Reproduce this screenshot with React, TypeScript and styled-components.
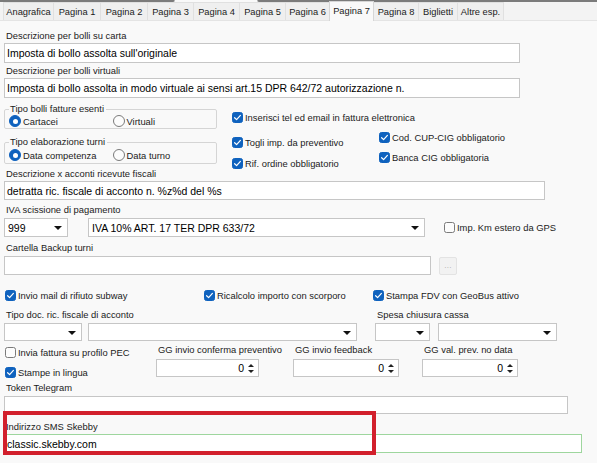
import React from 'react';
import styled, { createGlobalStyle } from 'styled-components';

const GlobalStyle = createGlobalStyle`
  html, body { margin: 0; padding: 0; background: #f9f9f9; }
  body { font-family: "Liberation Sans", Arial, sans-serif; color: #1b1b1b; }
`;

const Page = styled.div`
  width: 597px;
  height: 463px;
  overflow: hidden;
  background: #f9f9f9;
`;

const TopEdge = styled.div`
  display: flex;
  height: 2px;
`;

const EdgeLine = styled.div<{ $w?: number; $round?: 'left' | 'right' }>`
  ${(p) => (p.$w ? `width: ${p.$w}px;` : 'flex: 1;')}
  height: 2px;
  box-sizing: border-box;
  border-bottom: 2px solid #7b7b7b;
  ${(p) => p.$round === 'right' && 'border-right: 1px solid #9a9a9a; border-bottom-right-radius: 3px;'}
  ${(p) => p.$round === 'left' && 'border-left: 1px solid #9a9a9a; border-bottom-left-radius: 3px;'}
`;

const EdgeGap = styled.div<{ $w: number }>`
  width: ${(p) => p.$w}px;
`;

const TabStrip = styled.div`
  display: flex;
  align-items: flex-end;
  height: 19px;
  padding-left: 3px;
  background: #f3f3f3;
  border-bottom: 1px solid #e4e4e4;
  box-sizing: border-box;
`;

const Tab = styled.div<{ $active?: boolean; $w: number }>`
  width: ${(p) => p.$w + 1}px;
  height: ${(p) => (p.$active ? 20 : 18)}px;
  line-height: 18px;
  text-align: center;
  font-size: 9.3px;
  white-space: nowrap;
  box-sizing: border-box;
  background: ${(p) => (p.$active ? '#f9f9f9' : '#efefef')};
  border: 1px solid ${(p) => (p.$active ? '#d6d6d6' : '#e0e0e0')};
  border-bottom: none;
  margin-right: -1px;
  margin-bottom: ${(p) => (p.$active ? -1 : 0)}px;
  position: relative;
  z-index: ${(p) => (p.$active ? 1 : 0)};
  color: #1b1b1b;
`;

const Panel = styled.div`
  padding: 7px 0 0 4px;
  display: flex;
  flex-direction: column;
`;

const Label = styled.div<{ $mt?: number; $w?: number }>`
  height: 15px;
  line-height: 15px;
  font-size: 9.4px;
  padding-left: 2px;
  white-space: nowrap;
  margin-top: ${(p) => p.$mt ?? 0}px;
  ${(p) => p.$w && `width: ${p.$w}px; flex: none; box-sizing: border-box;`}
`;

const TextBox = styled.div<{ $w: number; $h?: number; $mt?: number; $ok?: boolean }>`
  width: ${(p) => p.$w}px;
  height: ${(p) => p.$h ?? 20}px;
  margin-top: ${(p) => p.$mt ?? 0}px;
  box-sizing: border-box;
  border: 1px solid ${(p) => (p.$ok ? '#9ed69e' : '#c6c6c6')};
  background: #fff;
  font-size: 10.5px;
  color: #000;
  padding: 0 2px;
  display: flex;
  align-items: center;
  white-space: nowrap;
  overflow: hidden;
  flex: none;
`;

const MidSection = styled.div`
  display: flex;
  height: 68px;
`;

const GroupCol = styled.div`
  width: 228px;
  flex: none;
  display: flex;
  flex-direction: column;
`;

const Group = styled.fieldset<{ $mt: number; $pad: string }>`
  margin: ${(p) => p.$mt}px 0 0 0;
  width: 213px;
  box-sizing: border-box;
  border: 1px solid #d5d5d5;
  border-radius: 2px;
  padding: ${(p) => p.$pad};
  min-width: 0;
  display: flex;
`;

const Legend = styled.legend`
  font-size: 9.4px;
  line-height: 10px;
  padding: 0 2px 0 1px;
  margin-left: 0;
  color: #1b1b1b;
`;

const RadioOpt = styled.div`
  display: flex;
  align-items: center;
  gap: 2px;
  width: 104px;
  height: 12px;
  font-size: 9.4px;
  white-space: nowrap;
`;

const RadioDot = styled.span<{ $on?: boolean }>`
  width: 12px;
  height: 12px;
  border-radius: 50%;
  box-sizing: border-box;
  flex: none;
  display: flex;
  align-items: center;
  justify-content: center;
  background: ${(p) => (p.$on ? '#0f62be' : '#fcfcfc')};
  border: 1px solid ${(p) => (p.$on ? '#0f62be' : '#7a7a7a')};
  &::after {
    content: '';
    display: ${(p) => (p.$on ? 'block' : 'none')};
    width: 5px;
    height: 5px;
    border-radius: 50%;
    background: #fff;
  }
`;

const CheckArea = styled.div`
  display: flex;
  flex-direction: column;
  padding-top: 12px;
`;

const CheckCols = styled.div`
  display: flex;
`;

const CheckCol = styled.div<{ $w?: number; $pt: number; $gap: number }>`
  display: flex;
  flex-direction: column;
  ${(p) => p.$w && `width: ${p.$w}px; flex: none;`}
  padding-top: ${(p) => p.$pt}px;
  gap: ${(p) => p.$gap}px;
`;

const CheckLine = styled.div<{ $ml?: number; $w?: number }>`
  display: flex;
  align-items: center;
  gap: 2px;
  height: 14px;
  font-size: 9.4px;
  white-space: nowrap;
  margin-left: ${(p) => p.$ml ?? 0}px;
  ${(p) => p.$w && `width: ${p.$w}px;`}
  flex: none;
`;

const Box = styled.span<{ $on?: boolean }>`
  width: 11px;
  height: 11px;
  border-radius: 2.5px;
  box-sizing: border-box;
  flex: none;
  display: flex;
  align-items: center;
  justify-content: center;
  background: ${(p) => (p.$on ? '#0f62be' : '#fcfcfc')};
  border: 1px solid ${(p) => (p.$on ? '#0f62be' : '#7a7a7a')};
`;

const Row = styled.div<{ $mt?: number }>`
  display: flex;
  align-items: center;
  margin-top: ${(p) => p.$mt ?? 0}px;
`;

const Combo = styled.div<{ $w: number; $h: number; $ml?: number }>`
  width: ${(p) => p.$w}px;
  height: ${(p) => p.$h}px;
  margin-left: ${(p) => p.$ml ?? 0}px;
  flex: none;
  box-sizing: border-box;
  border: 1px solid #c6c6c6;
  background: #fff;
  display: flex;
  align-items: center;
  justify-content: space-between;
  padding: 0 5px 0 3px;
  font-size: 10.5px;
  color: #000;
  white-space: nowrap;
`;

const DropArrow = styled.span`
  width: 0;
  height: 0;
  border-left: 4px solid transparent;
  border-right: 4px solid transparent;
  border-top: 4.5px solid #111;
  margin-top: 1px;
`;

const DotsButton = styled.div`
  width: 18px;
  height: 18px;
  margin-left: 8px;
  box-sizing: border-box;
  border: 1px solid #e3e3e3;
  border-radius: 2px;
  background: #f2f2f2;
  color: #a9a9a9;
  font-size: 8px;
  display: flex;
  align-items: center;
  justify-content: center;
  letter-spacing: 0.3px;
`;

const SpinRow = styled.div`
  display: flex;
  align-items: flex-start;
  height: 38px;
`;

const LeftChecks = styled.div`
  width: 152px;
  flex: none;
  display: flex;
  flex-direction: column;
  gap: 6px;
  padding-top: 4px;
`;

const SpinField = styled.div<{ $ml?: number; $w: number }>`
  display: flex;
  flex-direction: column;
  width: ${(p) => p.$w}px;
  flex: none;
  margin-left: ${(p) => p.$ml ?? 0}px;
  padding-top: 1px;
`;

const SpinBox = styled.div`
  height: 18px;
  margin-top: 2px;
  box-sizing: border-box;
  border: 1px solid #c6c6c6;
  background: #fff;
  display: flex;
  align-items: center;
  justify-content: flex-end;
  padding-right: 4px;
  font-size: 10.5px;
  color: #000;
`;

const SpinArrows = styled.span`
  display: flex;
  flex-direction: column;
  gap: 3px;
  margin-left: 3px;
  width: 7px;
  align-items: center;
`;

const SpinTri = styled.span<{ $up?: boolean }>`
  width: 0;
  height: 0;
  border-left: 3px solid transparent;
  border-right: 3px solid transparent;
  ${(p) => (p.$up ? 'border-bottom: 3.5px solid #222;' : 'border-top: 3.5px solid #222;')}
`;

const SmsBlock = styled.div`
  position: relative;
  margin-top: 5px;
`;

const Highlight = styled.div`
  position: absolute;
  left: -1px;
  top: -8px;
  width: 373px;
  height: 44px;
  box-sizing: border-box;
  border: 4px solid #d2202c;
  pointer-events: none;
`;

const Check = ({ on, children, ml, w }: { on?: boolean; children: React.ReactNode; ml?: number; w?: number }) => (
  <CheckLine $ml={ml} $w={w}>
    <Box $on={on}>
      {on && (
        <svg width="9" height="9" viewBox="0 0 9 9">
          <polyline points="1.6,4.7 3.6,6.6 7.4,2.4" fill="none" stroke="#fff" strokeWidth="1.2" strokeLinecap="round" strokeLinejoin="round" />
        </svg>
      )}
    </Box>
    <span>{children}</span>
  </CheckLine>
);

const Radio = ({ on, children }: { on?: boolean; children: React.ReactNode }) => (
  <RadioOpt>
    <RadioDot $on={on} />
    <span>{children}</span>
  </RadioOpt>
);

const Spin = () => (
  <SpinBox>
    0
    <SpinArrows>
      <SpinTri $up />
      <SpinTri />
    </SpinArrows>
  </SpinBox>
);

const tabs: [string, number][] = [
  ['Anagrafica', 50],
  ['Pagina 1', 47],
  ['Pagina 2', 47],
  ['Pagina 3', 46],
  ['Pagina 4', 46],
  ['Pagina 5', 46],
  ['Pagina 6', 44],
  ['Pagina 7', 44],
  ['Pagina 8', 45],
  ['Biglietti', 39],
  ['Altre esp.', 46],
];

export default function App() {
  return (
    <Page>
      <GlobalStyle />
      <TopEdge>
        <EdgeLine $w={175} $round="right" />
        <EdgeGap $w={82} />
        <EdgeLine $round="left" />
      </TopEdge>
      <TabStrip>
        {tabs.map(([t, w]) => (
          <Tab key={t} $w={w} $active={t === 'Pagina 7'}>
            {t}
          </Tab>
        ))}
      </TabStrip>

      <Panel>
        <Label>Descrizione per bolli su carta</Label>
        <TextBox $w={516}>Imposta di bollo assolta sull'originale</TextBox>
        <Label>Descrizione per bolli virtuali</Label>
        <TextBox $w={516}>Imposta di bollo assolta in modo virtuale ai sensi art.15 DPR 642/72 autorizzazione n.</TextBox>

        <MidSection>
          <GroupCol>
            <Group $mt={6} $pad="1px 0 1px 4px">
              <Legend>Tipo bolli fatture esenti</Legend>
              <Radio on>Cartacei</Radio>
              <Radio>Virtuali</Radio>
            </Group>
            <Group $mt={8} $pad="2px 0 2px 4px">
              <Legend>Tipo elaborazione turni</Legend>
              <Radio on>Data competenza</Radio>
              <Radio>Data turno</Radio>
            </Group>
          </GroupCol>
          <CheckArea>
            <Check on>Inserisci tel ed email in fattura elettronica</Check>
            <CheckCols>
              <CheckCol $w={147} $pt={11} $gap={7}>
                <Check on>Togli imp. da preventivo</Check>
                <Check on>Rif. ordine obbligatorio</Check>
              </CheckCol>
              <CheckCol $pt={6} $gap={6}>
                <Check on>Cod. CUP-CIG obbligatorio</Check>
                <Check on>Banca CIG obbligatoria</Check>
              </CheckCol>
            </CheckCols>
          </CheckArea>
        </MidSection>

        <Label>Descrizione x acconti ricevute fiscali</Label>
        <TextBox $w={541} $h={19}>detratta ric. fiscale di acconto n. %z%d del %s</TextBox>

        <Label $mt={2}>IVA scissione di pagamento</Label>
        <Row $mt={1}>
          <Combo $w={64} $h={19}>
            999
            <DropArrow />
          </Combo>
          <Combo $w={337} $h={19} $ml={20}>
            IVA 10% ART. 17 TER DPR 633/72
            <DropArrow />
          </Combo>
          <Check ml={19}>Imp. Km estero da GPS</Check>
        </Row>

        <Label $mt={3}>Cartella Backup turni</Label>
        <Row $mt={1}>
          <TextBox $w={427} $h={19} />
          <DotsButton>...</DotsButton>
        </Row>

        <Row $mt={13}>
          <Check on ml={1} w={199}>Invio mail di rifiuto subway</Check>
          <Check on w={169}>Ricalcolo importo con scorporo</Check>
          <Check on>Stampa FDV con GeoBus attivo</Check>
        </Row>

        <Row $mt={5}>
          <Label $w={371}>Tipo doc. ric. fiscale di acconto</Label>
          <Label>Spesa chiusura cassa</Label>
        </Row>
        <Row $mt={1}>
          <Combo $w={78} $h={18}>
            <span />
            <DropArrow />
          </Combo>
          <Combo $w={269} $h={18} $ml={6}>
            <span />
            <DropArrow />
          </Combo>
          <Combo $w={55} $h={18} $ml={18}>
            <span />
            <DropArrow />
          </Combo>
          <Combo $w={119} $h={18} $ml={8}>
            <span />
            <DropArrow />
          </Combo>
        </Row>

        <SpinRow>
          <LeftChecks>
            <Check ml={1}>Invia fattura su profilo PEC</Check>
            <Check on ml={1}>Stampe in lingua</Check>
          </LeftChecks>
          <SpinField $w={103}>
            <Label>GG invio conferma preventivo</Label>
            <Spin />
          </SpinField>
          <SpinField $ml={34} $w={106}>
            <Label>GG invio feedback</Label>
            <Spin />
          </SpinField>
          <SpinField $ml={23} $w={96}>
            <Label>GG val. prev. no data</Label>
            <Spin />
          </SpinField>
        </SpinRow>

        <Label $mt={1}>Token Telegram</Label>
        <TextBox $w={564} $h={18} $mt={1} />

        <SmsBlock>
          <Label>Indirizzo SMS Skebby</Label>
          <TextBox $w={578} $h={19} $ok>
            classic.skebby.com
          </TextBox>
          <Highlight />
        </SmsBlock>
      </Panel>
    </Page>
  );
}
